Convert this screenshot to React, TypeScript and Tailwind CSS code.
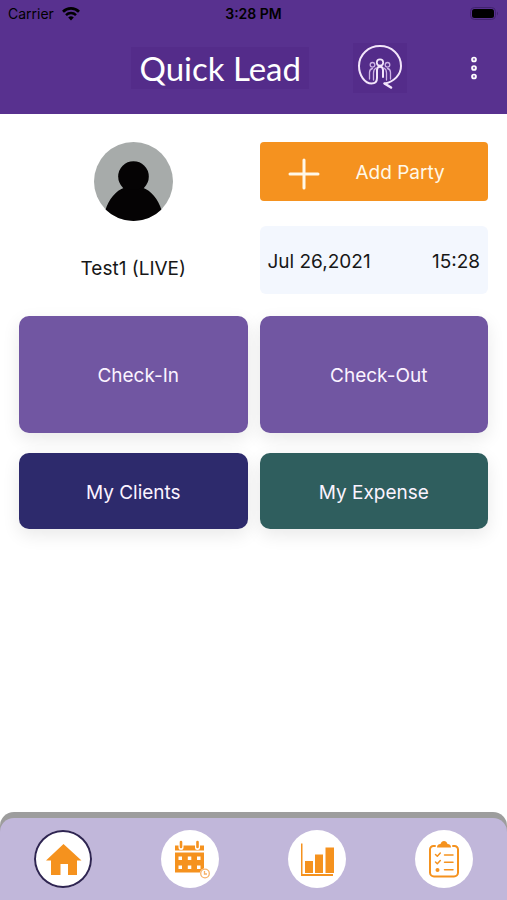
import type { ReactNode } from "react";

function StatusBar() {
  return (
    <div className="grid h-7 grid-cols-3 items-center px-2 text-sm text-black">
      <div className="flex items-center gap-2">
        <span>Carrier</span>
        <svg viewBox="0 0 18 14" className="h-[14px] w-[18px]" fill="none" stroke="currentColor" aria-hidden="true">
          <path d="M1 4.700a11.5 11.5 0 0 1 16 0" strokeWidth="2.7" />
          <path d="M4 8.100a7.2 7.2 0 0 1 10 0" strokeWidth="2.5" />
          <path d="M9 13.500 6.2 10.500a4 4 0 0 1 5.6 0z" fill="currentColor" stroke="none" />
        </svg>
      </div>
      <span className="text-center font-semibold">3:28 PM</span>
      <svg viewBox="0 0 30 14" className="h-[14px] w-[30px] justify-self-end" aria-hidden="true">
        <rect x="1.500" y="0.5" width="25" height="12" rx="4" fill="none" stroke="#41236f" />
        <rect x="3" y="2" width="22" height="9" rx="2.5" fill="#000" />
        <path d="M28 4.5q2 2 0 4z" fill="#41236f" />
      </svg>
    </div>
  );
}

function Logo() {
  return (
    <svg viewBox="0 0 54 50" className="h-[50px] w-[54px] shrink-0 bg-[#542c8a]" fill="none" stroke="#f3e6fb" strokeLinecap="round" role="img" aria-label="Quick Lead logo">
      <path d="M32 40.500C41 38.500 48 32 48 23C48 11.500 38.500 3 27 3S6 11.500 6 23C6 32.500 12 40.500 18.500 40.500C23 40.500 24 38 24 35v-8c0-4.500 6-4.500 6 0v7" strokeWidth="2" />
      <path d="m31.500 40.500 6.500 4" strokeWidth="2.600" />
      <g strokeWidth="1.300" stroke="#cdb2e5">
        <circle cx="27" cy="19.500" r="3.200" stroke="#f3e6fb" strokeWidth="1.700" />
        <circle cx="19.500" cy="21.800" r="2.300" />
        <circle cx="34.500" cy="21.800" r="2.300" />
        <path d="M16.500 36v-6.500c0-2.500 1-3.500 3-4M20.500 37v-7c0-3 .5-4 2.500-5M37.500 36v-6.500c0-2.500-1-3.500-3-4M33.500 37v-7c0-3-.5-4-2.500-5" />
      </g>
    </svg>
  );
}

function Header() {
  return (
    <header className="bg-[#58318f] pb-6">
      <StatusBar />
      <div className="flex h-[62px] items-center justify-end pt-[18px]">
        <h1 className="mr-11 bg-[#542c8a] px-2 font-['Lato','Liberation_Sans',sans-serif] text-[33px] leading-[42px] text-white">
          Quick Lead
        </h1>
        <Logo />
        <button type="button" aria-label="Menu" className="mr-5 ml-[54px] flex h-10 w-[26px] items-center justify-center">
          <svg viewBox="0 0 8 24" className="h-6 w-2" fill="#8d68b8" stroke="#fff" strokeWidth="1.700">
            <circle cx="4" cy="3.500" r="2" />
            <circle cx="4" cy="12" r="2" />
            <circle cx="4" cy="20.500" r="2" />
          </svg>
        </button>
      </div>
    </header>
  );
}

function Profile() {
  return (
    <section className="flex flex-col items-center gap-9">
      <svg viewBox="0 0 80 80" className="size-[79px]" role="img" aria-label="Profile picture">
        <defs>
          <clipPath id="avatar">
            <circle cx="40" cy="40" r="40" />
          </clipPath>
        </defs>
        <g clipPath="url(#avatar)">
          <rect width="80" height="80" fill="#a7abaa" />
          <circle cx="40" cy="35" r="15.500" fill="#050304" />
          <path d="M31 46q9 5 18 0c9 3 16 12 19.500 23L60 82H20L11.500 69C15 58 22 49 31 46z" fill="#050304" />
        </g>
      </svg>
      <p className="leading-6">Test1 (LIVE)</p>
    </section>
  );
}

function Tile({ className, children }: { className: string; children: ReactNode }) {
  return (
    <button
      type="button"
      className={`rounded-[10px] pt-1 text-[#fbf3ff] shadow-[0_6px_18px_rgba(0,0,0,0.09)] ${className}`}
    >
      {children}
    </button>
  );
}

function HomeIcon() {
  return (
    <svg viewBox="0 0 58 58" className="size-full" fill="#f5921e" aria-hidden="true">
      <path d="M29.500 14 47.500 30.500H43V45h-9V34h-7.500v11H17V30.500h-5z" />
    </svg>
  );
}

function CalendarIcon() {
  return (
    <svg viewBox="0 0 58 58" className="size-full" fill="#f5921e" aria-hidden="true">
      <path d="M14 15.500h29v5H14zM14 22.500h29V42.500H14z" />
      <path d="M20 12v5.500M36.500 12v5.500" stroke="#fff" strokeWidth="5" strokeLinecap="round" />
      <path d="M20 12v5M36.500 12v5" stroke="#f5921e" strokeWidth="2.600" strokeLinecap="round" />
      <path fill="#fff" d="M17.500 26.500H21V30h-3.500zM26.800 26.500h3.500V30h-3.500zM36 26.500h3.500V30H36zM17.500 35.500H21V39h-3.500zM26.800 35.500h3.500V39h-3.500zM36 35.500h3.500V39H36z" />
      <circle cx="44" cy="43.500" r="5.200" fill="#fff" />
      <g fill="none" stroke="#f7b269" strokeWidth="1.300">
        <circle cx="44" cy="43.500" r="4.300" />
        <path d="M43.500 41v3H46" />
      </g>
    </svg>
  );
}

function ChartIcon() {
  return (
    <svg viewBox="0 0 58 58" className="size-full" fill="#f5921e" aria-hidden="true">
      <path d="M13 13.500h1.500V44H45v2H13zM17 31h8v12h-8zM27 24.500h8v18.500h-8zM37.500 17.500H46V43h-8.500z" />
    </svg>
  );
}

function ChecklistIcon() {
  return (
    <svg viewBox="0 0 58 58" className="size-full" fill="none" stroke="#f5921e" strokeLinecap="round" strokeLinejoin="round" aria-hidden="true">
      <path d="M20 16h-1.500a3.500 3.500 0 0 0-3.500 3.500v23a4 4 0 0 0 4 4h20a4 4 0 0 0 4-4v-23a3.500 3.500 0 0 0-3.500-3.500H38" strokeWidth="2" />
      <path d="M22 17.500q0-3.500 3.500-3.500c1-4 6-4 7 0q3.500 0 3.500 3.500z" fill="#f5921e" stroke="none" />
      <path d="m20.500 24.500 1.800 1.800 3-3.300M20.500 32l1.800 1.800 3-3.300M29.500 25H38M29.500 32.300H38M29.500 39.800H38" strokeWidth="1.500" />
      <circle cx="22.500" cy="40" r="2" fill="#f5921e" stroke="none" />
    </svg>
  );
}

const tabs = [
  { label: "Home", icon: <HomeIcon />, active: true },
  { label: "Calendar", icon: <CalendarIcon />, active: false },
  { label: "Reports", icon: <ChartIcon />, active: false },
  { label: "Tasks", icon: <ChecklistIcon />, active: false },
];

function TabBar() {
  return (
    <nav className="rounded-t-[14px] bg-[#9d9d9d] pt-[6px]">
      <div className="grid grid-cols-4 justify-items-center rounded-t-[14px] bg-[#c1b7da] py-3">
        {tabs.map((tab) => (
          <button
            key={tab.label}
            type="button"
            aria-label={tab.label}
            className={`size-[58px] rounded-full bg-white ${tab.active ? "ring-2 ring-[#2e2452] ring-inset" : ""}`}
          >
            {tab.icon}
          </button>
        ))}
      </div>
    </nav>
  );
}

export default function App() {
  return (
    <div className="flex min-h-screen flex-col bg-white font-['Inter','Liberation_Sans',sans-serif] text-[19px] text-[#171717]">
      <Header />
      <main className="flex-1 px-[19px] pt-7">
        <div className="grid grid-cols-2 gap-3">
          <Profile />
          <section className="flex flex-col gap-[25px]">
            <button type="button" className="flex h-[59px] items-center gap-9 rounded pt-1 pl-7 bg-[#f5921f] text-[#fff8e8]">
              <svg viewBox="0 0 32 32" className="size-8" stroke="#fff8e8" strokeWidth="3" strokeLinecap="round" aria-hidden="true">
                <path d="M16 2v28M2 16h28" />
              </svg>
              <span>Add Party</span>
            </button>
            <div className="flex h-[68px] items-center justify-between rounded-md bg-[#f3f7fe] px-2 pt-1">
              <time dateTime="2021-07-26">Jul 26,2021</time>
              <time dateTime="15:28">15:28</time>
            </div>
          </section>
        </div>
        <div className="mt-[22px] grid grid-cols-2 gap-x-3 gap-y-5">
          <Tile className="h-[117px] bg-[#7156a2] pl-2.5">Check-In</Tile>
          <Tile className="h-[117px] bg-[#7156a2] pl-2.5">Check-Out</Tile>
          <Tile className="h-[76px] bg-[#2d2a6c]">My Clients</Tile>
          <Tile className="h-[76px] bg-[#2f5e5e]">My Expense</Tile>
        </div>
      </main>
      <TabBar />
    </div>
  );
}
